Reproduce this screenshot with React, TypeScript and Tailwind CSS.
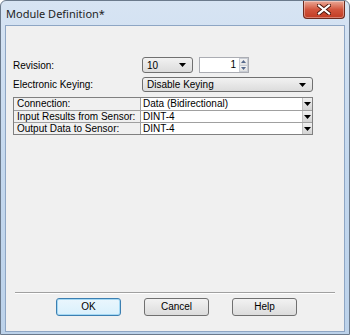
import React from 'react';

const ComboArrow: React.FC = () => (
    <svg width="7" height="4" viewBox="0 0 7 4" className="shrink-0">
        <path d="M0 0 H7 L3.5 4 Z" fill="#000" />
    </svg>
);

const DropButton: React.FC<{ value: string; className?: string }> = ({ value, className }) => (
    <div
        className={`flex items-center justify-between rounded-[3px] border border-[#707070] bg-gradient-to-b from-[#f2f2f2] to-[#dcdcdc] pl-[4px] pr-[6px] ${className ?? ''}`}
    >
        <span>{value}</span>
        <ComboArrow />
    </div>
);

const SpinBox: React.FC<{ value: string }> = ({ value }) => (
    <div className="flex h-[16px] w-[50px] border border-[#abadb3] bg-white">
        <span className="flex-1 pr-[3px] text-right leading-[14px]">{value}</span>
        <div className="flex w-[9px] flex-col">
            <div className="flex flex-1 items-center justify-center border border-[#c8ccd4] bg-gradient-to-b from-[#f4f4f4] to-[#e2e2e2]">
                <svg width="5" height="3" viewBox="0 0 5 3">
                    <path d="M0 3 L2.5 0 L5 3 Z" fill="#56698c" />
                </svg>
            </div>
            <div className="flex flex-1 items-center justify-center border border-t-0 border-[#c8ccd4] bg-gradient-to-b from-[#f4f4f4] to-[#e2e2e2]">
                <svg width="5" height="3" viewBox="0 0 5 3">
                    <path d="M0 0 H5 L2.5 3 Z" fill="#56698c" />
                </svg>
            </div>
        </div>
    </div>
);

const rows = [
    { label: 'Connection:', value: 'Data (Bidirectional)' },
    { label: 'Input Results from Sensor:', value: 'DINT-4' },
    { label: 'Output Data to Sensor:', value: 'DINT-4' },
];

const DialogButton: React.FC<{ label: string; isDefault?: boolean }> = ({ label, isDefault }) => (
    <button
        className={`h-[18px] w-[65px] rounded-[3px] border text-center leading-[16px] ${
            isDefault
                ? 'border-[#3c7fb1] bg-gradient-to-b from-[#eaf6fd] to-[#d9f0fc] shadow-[inset_0_0_0_1px_#a4d8f4]'
                : 'border-[#707070] bg-gradient-to-b from-[#f2f2f2] to-[#dcdcdc]'
        }`}
    >
        {label}
    </button>
);

const App: React.FC = () => {
    return (
        <div className="flex h-[335px] w-[350px] flex-col overflow-hidden rounded-t-[6px] border border-[#6b7a8c] bg-gradient-to-b from-[#d7e4f3] via-[#c4d8ee] to-[#bcd2ea] font-['Liberation_Sans',Arial,sans-serif] text-[10px] text-black">
            {/* title bar */}
            <div className="flex h-[24px] shrink-0 items-start justify-between">
                <span className="pl-[5px] pt-[6px] font-['Noto_Sans',sans-serif] text-[11px] leading-[14px] text-[#1e1e1e]">
                    Module Definition*
                </span>
                <div className="mr-[4px] flex h-[18px] w-[42px] items-center justify-center rounded-b-[4px] border border-t-0 border-[#6c2a1e] bg-gradient-to-b from-[#e9a897] via-[#d2553d] to-[#c13b22] shadow-[inset_0_0_0_1px_rgba(255,255,255,0.35)]">
                    <svg width="14" height="11" viewBox="0 0 14 11">
                        <path d="M2 1.5 L12 9.5 M12 1.5 L2 9.5" stroke="#4a1409" strokeWidth="4" strokeLinecap="square" />
                        <path d="M2 1.5 L12 9.5 M12 1.5 L2 9.5" stroke="#ffffff" strokeWidth="2.2" strokeLinecap="square" />
                    </svg>
                </div>
            </div>

            {/* client area */}
            <div className="mx-[4px] flex h-[307px] flex-col border border-[#8ea6c4] bg-[#f0f0f0] px-[7px] pt-[31px] whitespace-nowrap">
                <div className="flex h-[16px] items-center">
                    <span className="w-[129px]">Revision:</span>
                    <DropButton value="10" className="h-[16px] w-[51px]" />
                    <div className="ml-[6px]">
                        <SpinBox value="1" />
                    </div>
                </div>
                <div className="mt-[4px] flex h-[15px] items-center">
                    <span className="w-[129px]">Electronic Keying:</span>
                    <DropButton value="Disable Keying" className="h-[15px] w-[171px]" />
                </div>

                <div className="mt-[5px] w-[300px] border border-[#808080]">
                    {rows.map((row, i) => (
                        <div key={row.label} className={`flex h-[12px] ${i > 0 ? 'border-t border-[#a0a0a0]' : ''}`}>
                            <div className="w-[127px] overflow-hidden border-r border-[#a0a0a0] pl-[3px] leading-[11px]">{row.label}</div>
                            <div className="flex flex-1 items-stretch justify-between bg-white pl-[2px] leading-[11px]">
                                <span>{row.value}</span>
                                <div className="flex w-[10px] items-center justify-center border-l border-[#c0c0c0] bg-gradient-to-b from-[#f0f0f0] to-[#d4d4d4]">
                                    <ComboArrow />
                                </div>
                            </div>
                        </div>
                    ))}
                </div>

                <div className="mx-[2px] mt-auto mb-[4px] h-[2px] border-t border-b border-t-[#a0a0a0] border-b-white" />
                <div className="mb-[15px] flex gap-[23px] pl-[43px]">
                    <DialogButton label="OK" isDefault />
                    <DialogButton label="Cancel" />
                    <DialogButton label="Help" />
                </div>
            </div>
        </div>
    );
};

export default App;
